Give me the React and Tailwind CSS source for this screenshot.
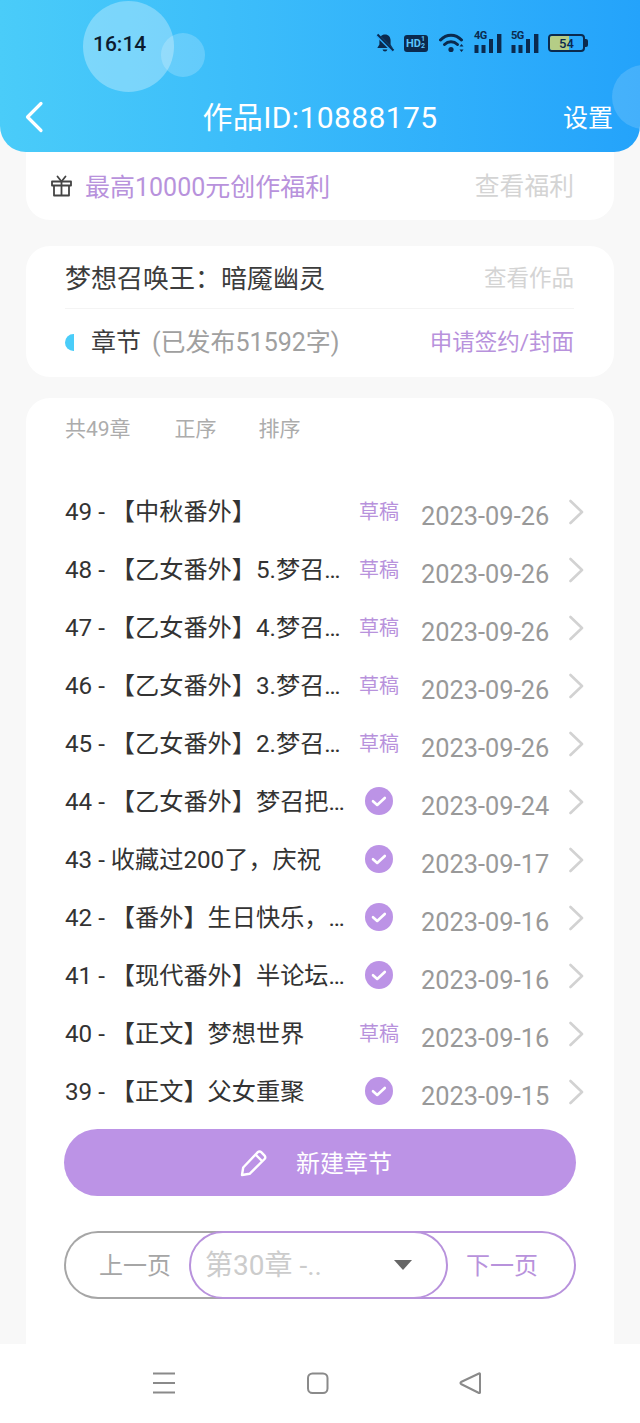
import React from "react";

const FONT = { fontFamily: '"Roboto","Noto Sans CJK SC",sans-serif' };

const rows = [
  ["49 - 【中秋番外】", "d", "2023-09-26"],
  ["48 - 【乙女番外】5.梦召\u2026", "d", "2023-09-26"],
  ["47 - 【乙女番外】4.梦召\u2026", "d", "2023-09-26"],
  ["46 - 【乙女番外】3.梦召\u2026", "d", "2023-09-26"],
  ["45 - 【乙女番外】2.梦召\u2026", "d", "2023-09-26"],
  ["44 - 【乙女番外】梦召把\u2026", "c", "2023-09-24"],
  ["43 - 收藏过200了\uFF0C庆祝", "c", "2023-09-17"],
  ["42 - 【番外】生日快乐\uFF0C\u2026", "c", "2023-09-16"],
  ["41 - 【现代番外】半论坛\u2026", "c", "2023-09-16"],
  ["40 - 【正文】梦想世界", "d", "2023-09-16"],
  ["39 - 【正文】父女重聚", "c", "2023-09-15"],
];

function Check() {
  return (
    <svg width="28" height="28" viewBox="0 0 28 28" className="block">
      <circle cx="14" cy="14" r="14" fill="#bc93e6" />
      <path d="M8 14.2l4.2 3.8 7.6-7" fill="none" stroke="#fff" strokeWidth="2.6" strokeLinecap="round" strokeLinejoin="round" />
    </svg>
  );
}

function Chevron() {
  return (
    <svg width="15" height="26" viewBox="0 0 15 26" className="block">
      <path d="M1.5 2l11.5 11-11.5 11" fill="none" stroke="#d2d2d2" strokeWidth="2.6" strokeLinecap="round" strokeLinejoin="round" />
    </svg>
  );
}

function Signal({ label }) {
  return (
    <div className="relative w-[28px] h-[20px]">
      <span className="absolute left-0 top-[-3px] text-[11px] font-bold leading-[12px] tracking-[-0.5px] text-[#0b2a4e]">{label}</span>
      <svg width="28" height="20" viewBox="0 0 28 20" className="block">
        <rect x="0.5" y="12" width="4" height="8" fill="#0b2a4e" />
        <rect x="7.5" y="12" width="4" height="8" fill="#0b2a4e" />
        <rect x="15" y="6" width="4" height="14" fill="#0b2a4e" />
        <rect x="23" y="1" width="4.4" height="19" fill="#0b2a4e" />
      </svg>
    </div>
  );
}

export default function App() {
  return (
    <div className="relative w-[640px] h-[1423px] bg-[#f8f8f8] flex flex-col overflow-hidden" style={FONT}>
      <header className="relative h-[152px] shrink-0 rounded-b-[26px] overflow-hidden bg-gradient-to-r from-[#4accf9] to-[#24a3fb]">
        <div className="absolute left-[83px] top-[1px] w-[91px] h-[91px] rounded-full bg-white/30" />
        <div className="absolute left-[161px] top-[33px] w-[44px] h-[44px] rounded-full bg-white/20" />
        <div className="absolute left-[612px] top-[65px] w-[64px] h-[64px] rounded-full bg-white/15" />

        <div className="relative flex items-center h-[86px] pl-[93px] pr-[52px]">
          <span className="pt-[3px] text-[21px] font-medium text-[#0c1b2e]">16:14</span>
          <div className="ml-auto flex items-center">
            <svg width="20" height="20" viewBox="0 0 20 20" className="block">
              <path d="M10 1.5c-3.5 0-5.6 2.6-5.6 6v4L2.3 15h15.4l-2.1-3.5v-4c0-3.4-2.1-6-5.6-6z" fill="#0b2a4e" />
              <path d="M7.5 16.5a2.6 2.6 0 005 0z" fill="#0b2a4e" />
              <path d="M2 2l16 16" stroke="#2ba8fa" strokeWidth="3.4" />
              <path d="M2.5 1.5l16 16" stroke="#0b2a4e" strokeWidth="2" />
            </svg>
            <div className="ml-[9px] w-[24px] h-[17px] rounded-[3px] bg-[#0b2a4e] flex items-center pl-[2px]">
              <span className="text-[11px] font-bold leading-none text-[#5cc4fb]">HD</span>
              <span className="text-[7px] font-bold leading-[7px] w-[5px] text-[#5cc4fb]">1 2</span>
            </div>
            <svg width="26" height="20" viewBox="0 0 26 20" className="ml-[11px] block">
              <path d="M1.5 7c6-6.5 15-6.5 21 0" fill="none" stroke="#0b2a4e" strokeWidth="3" strokeLinecap="round" />
              <path d="M5.5 11.5c3.8-3.6 9.2-3.6 13 0" fill="none" stroke="#0b2a4e" strokeWidth="3" strokeLinecap="round" />
              <circle cx="12" cy="16.5" r="2.6" fill="#0b2a4e" />
              <path d="M20.5 13.5l2-2.4 2 2.4zM20.5 16.5l2 2.4 2-2.4z" fill="#0b2a4e" />
            </svg>
            <div className="ml-[9px]"><Signal label="4G" /></div>
            <div className="ml-[9px]"><Signal label="5G" /></div>
            <div className="ml-[9px] flex items-center">
              <div className="relative w-[37px] h-[18px] rounded-[4px] border-2 border-[#0b2a4e] overflow-hidden flex items-center justify-center">
                <div className="absolute left-0 top-0 bottom-0 w-[19px] bg-[#b5cd86]" />
                <span className="relative text-[13px] leading-none font-medium text-[#0b2a4e]">54</span>
              </div>
              <div className="w-[3px] h-[8px] rounded-r-[2px] bg-[#0b2a4e]" />
            </div>
          </div>
        </div>

        <div className="relative flex items-center justify-center h-[66px] pb-[2px]">
          <svg width="20" height="32" viewBox="0 0 20 32" className="absolute left-[24px] top-[15px]">
            <path d="M17 2.5L3.5 16 17 29.5" fill="none" stroke="#fff" strokeWidth="3.2" strokeLinecap="round" strokeLinejoin="round" />
          </svg>
          <span className="text-[30px] leading-none tracking-[0.4px] text-white">作品ID:10888175</span>
          <span className="absolute right-[27px] top-[18px] text-[25px] leading-[30px] text-white">设置</span>
        </div>
      </header>

      <main className="flex-1 min-h-0 px-[26px] flex flex-col">
        <section className="h-[68px] shrink-0 bg-white rounded-b-[24px] flex items-center pl-[25px] pr-[40px]">
          <svg width="21" height="22" viewBox="0 0 21 22" className="block">
            <g fill="none" stroke="#444" strokeWidth="1.8" strokeLinejoin="round">
              <rect x="1" y="6.5" width="19" height="4" />
              <path d="M3 10.5V20.5H18V10.5M10.5 6.5V20.5" />
              <path d="M10.5 6.5L6.5 1.5M10.5 6.5L14.5 1.5" strokeLinecap="round" />
            </g>
          </svg>
          <span className="ml-[13px] pt-[3px] text-[25px] leading-none text-[#b892dc]">最高10000元创作福利</span>
          <span className="ml-auto pt-[3px] text-[24.8px] leading-none text-[#d4d4d4]">查看福利</span>
        </section>

        <section className="mt-[26px] h-[131px] shrink-0 bg-white rounded-[24px] px-[39px] pr-[40px] flex flex-col">
          <div className="h-[63px] flex items-center justify-between border-b border-[#f4f4f4]">
            <span className="pt-[3px] text-[26px] leading-none text-[#3c3c3c]">{"梦想召唤王\uFF1A暗魇幽灵"}</span>
            <span className="pt-[3px] text-[22.5px] leading-none text-[#d4d4d4]">查看作品</span>
          </div>
          <div className="h-[66px] flex items-center">
            <span className="w-[9px] h-[17px] rounded-l-full bg-[#4acdf9]" />
            <span className="ml-[17px] text-[25px] leading-none text-[#3c3c3c]">章节</span>
            <span className="ml-[11px] text-[25px] leading-none text-[#a0a0a0]">(已发布51592字)</span>
            <span className="ml-auto text-[22.5px] leading-none text-[#b892dc]">申请签约/封面</span>
          </div>
        </section>

        <section className="mt-[21px] flex-1 min-h-0 bg-white rounded-t-[24px] flex flex-col pl-[39px]">
          <div className="h-[62px] shrink-0 flex items-center text-[21px] leading-none text-[#acacac]">
            <span>共49章</span>
            <span className="ml-[44px]">正序</span>
            <span className="ml-[42px]">排序</span>
          </div>
          <div className="mt-[23px] flex flex-col">
            {rows.map(([title, st, date], i) => (
              <div key={i} className="h-[58px] flex items-center">
                <span className="w-[282px] shrink-0 whitespace-nowrap text-[24.2px] leading-[32px] text-[#333]">{title}</span>
                <div className="ml-[12px] w-[40px] flex justify-center">
                  {st === "d" ? (
                    <span className="text-[20px] leading-none text-[#b892dc]">草稿</span>
                  ) : (
                    <span className="pb-[2px]"><Check /></span>
                  )}
                </div>
                <span className="ml-[22px] w-[128px] shrink-0 whitespace-nowrap pt-[10px] text-[25.4px] leading-none text-[#999]">{date}</span>
                <span className="ml-[20px]"><Chevron /></span>
              </div>
            ))}
          </div>
          <button className="mt-[8px] w-[512px] h-[67px] shrink-0 rounded-full bg-[#bc93e6] flex items-center justify-center -ml-[1px] pr-[8px]">
            <svg width="28" height="28" viewBox="0 0 28 28" className="block">
              <path d="M2 26l1.2-7.5L17.8 3.2a2.4 2.4 0 013.4 0l3.4 3.4a2.4 2.4 0 010 3.4L9.6 24.8z" fill="none" stroke="#fff" strokeWidth="2.4" strokeLinejoin="round" />
              <path d="M15.5 5.5l7 7" stroke="#fff" strokeWidth="2.4" />
            </svg>
            <span className="ml-[28px] pt-[2px] text-[24px] leading-none text-white">新建章节</span>
          </button>
          <div className="mt-[35px] w-[512px] h-[68px] shrink-0 flex -ml-[1px]">
            <div className="w-[170px] shrink-0 h-full rounded-l-full border-2 border-r-0 border-[#a6a6a6] pl-[33px] flex items-center">
              <span className="pt-[2px] text-[24px] leading-none text-[#a6a6a6]">上一页</span>
            </div>
            <div className="relative z-10 -ml-[45px] w-[259px] shrink-0 h-full rounded-full border-2 border-[#b892dc] bg-white flex items-center pl-[14px] pr-[34px]">
              <span className="pt-[2px] text-[28px] leading-none text-[#cccccc]">第30章 -..</span>
              <span className="ml-auto w-0 h-0 border-x-[9px] border-x-transparent border-t-[10px] border-t-[#666]" />
            </div>
            <div className="flex-1 -ml-[40px] h-full rounded-r-full border-2 border-l-0 border-[#b892dc] pl-[58px] flex items-center">
              <span className="pt-[2px] text-[24px] leading-none text-[#b892dc]">下一页</span>
            </div>
          </div>
        </section>
      </main>

      <nav className="h-[79px] shrink-0 bg-white flex items-start pt-[28px] pl-[153px]">
        <svg width="23" height="22" viewBox="0 0 23 22" className="block">
          <path d="M0 1.5h22M0 11h22M0 20.5h22" stroke="#8a8a8a" strokeWidth="2" />
        </svg>
        <svg width="22" height="22" viewBox="0 0 22 22" className="block ml-[131px]">
          <rect x="1" y="1.5" width="19.5" height="19.5" rx="4.5" fill="none" stroke="#8a8a8a" strokeWidth="2" />
        </svg>
        <svg width="23" height="22" viewBox="0 0 23 22" className="block ml-[130px]">
          <path d="M21 2v18.5a0.6 0.6 0 01-1 .5L2 12a1.2 1.2 0 010-2L20 1.5a0.6 0.6 0 011 .5z" fill="none" stroke="#8a8a8a" strokeWidth="2" strokeLinejoin="round" />
        </svg>
      </nav>
    </div>
  );
}
